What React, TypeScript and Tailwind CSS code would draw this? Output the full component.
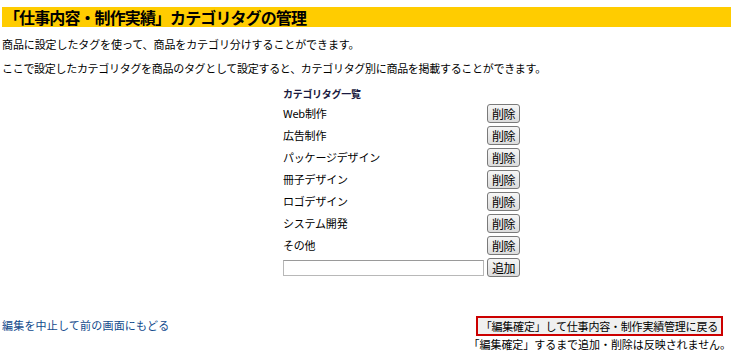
import React from "react";

const font = { fontFamily: '"Noto Sans CJK JP", "Noto Sans", sans-serif' };

const tags = ["Web制作", "広告制作", "パッケージデザイン", "冊子デザイン", "ロゴデザイン", "システム開発", "その他"];

function Btn({ children }: { children: React.ReactNode }) {
  return (
    <button className="h-[19px] w-[33px] flex items-center justify-center rounded-[3px] border border-[#7a7a7a] bg-gradient-to-b from-[#f6f6f6] to-[#dcdcdc] text-[12px] leading-none text-black tracking-[-0.5px]">
      {children}
    </button>
  );
}

export default function App() {
  return (
    <div className="w-[731px] h-[358px] bg-white text-black overflow-hidden" style={font}>
      <div className="pt-[7px]">
        <div className="ml-[2px] h-[20px] bg-[#ffcc00] flex items-center pl-[2px]">
          <h1 className="text-[16px] font-bold leading-none tracking-[-0.9px]">「仕事内容・制作実績」カテゴリタグの管理</h1>
        </div>
      </div>
      <p className="mt-[10px] ml-[2px] text-[11px] leading-[14px] tracking-[-0.1px]">商品に設定したタグを使って、商品をカテゴリ分けすることができます。</p>
      <p className="mt-[10px] ml-[2px] text-[11px] leading-[14px] tracking-[-0.3px]">ここで設定したカテゴリタグを商品のタグとして設定すると、カテゴリタグ別に商品を掲載することができます。</p>
      <div className="ml-[283px] mt-[10px] w-[237px]">
        <div className="h-[17px] flex items-center text-[10px] font-bold text-[#1a1a40] tracking-[-0.3px]">カテゴリタグ一覧</div>
        <div className="flex flex-col gap-[3px] mt-[2px]">
          {tags.map((t) => (
            <div key={t} className="flex items-center justify-between h-[19px]">
              <span className="text-[11px] tracking-[-0.2px]">{t}</span>
              <Btn>削除</Btn>
            </div>
          ))}
          <div className="flex items-center h-[19px] gap-[3px]">
            <input className="w-[201px] h-[16px] border border-[#b8b8b8] border-t-[#9a9a9a] bg-white outline-none" />
            <Btn>追加</Btn>
          </div>
        </div>
      </div>
      <div className="mt-[39px] flex justify-between items-start">
        <a className="ml-[2px] mt-[2px] text-[11px] text-[#114a8c] tracking-[0.2px] leading-[14px]">編集を中止して前の画面にもどる</a>
        <div className="flex flex-col items-end">
          <button className="mr-[8px] h-[20px] px-[3px] border-2 border-[#cc0000] bg-[#f0f0f0] text-[11px] leading-none tracking-[-0.2px] text-black">「編集確定」して仕事内容・制作実績管理に戻る</button>
          <span className="mt-[1px] text-[11px] leading-[14px] tracking-[-0.05px]">「編集確定」するまで追加・削除は反映されません。</span>
        </div>
      </div>
    </div>
  );
}
